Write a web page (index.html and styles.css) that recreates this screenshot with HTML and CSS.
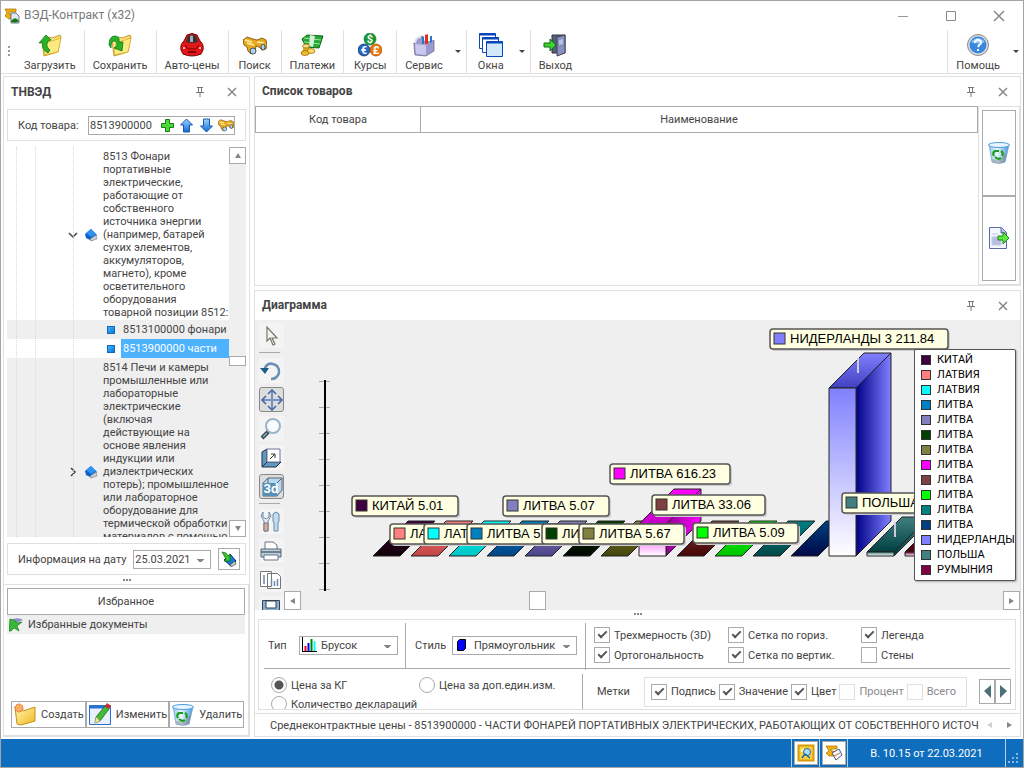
FILE: index.html
```html
<!DOCTYPE html>
<html lang="ru">
<head>
    <meta charset="UTF-8">
    <meta name="viewport" content="width=device-width, initial-scale=1.0">
    <title>ВЭД-Контракт (x32)</title>
    <link rel="stylesheet" href="styles.css">
</head>
<body>
    <!-- Общие значки -->
    <svg class="defs" width="0" height="0">
        <defs>
            <linearGradient id="gFolder" x1="0" y1="0" x2="1" y2="1"><stop offset="0" stop-color="#fff6b0"/><stop offset="1" stop-color="#f0b820"/></linearGradient>
            <linearGradient id="gBlue" x1="0" y1="0" x2="0" y2="1"><stop offset="0" stop-color="#9cd4ff"/><stop offset="1" stop-color="#1468d0"/></linearGradient>
            <linearGradient id="gBin" x1="0" y1="0" x2="1" y2="0"><stop offset="0" stop-color="#8cc8f4"/><stop offset=".4" stop-color="#eef6ff"/><stop offset="1" stop-color="#4898dc"/></linearGradient>
            <symbol id="i-folder" viewBox="0 0 24 24">
                <path d="M4 8l7-4 3 1 8-3 1 2-3 15-14 4z" fill="url(#gFolder)" stroke="#b88a10" stroke-width=".8"/>
                <path d="M6 22l2-12 15-5-3 14z" fill="#fdea80" stroke="#d0a020" stroke-width=".6"/>
            </symbol>
            <symbol id="i-book" viewBox="0 0 14 14">
                <path d="M1 6l6-5 6 6-5 6-6-3z" fill="#1060c8"/>
                <path d="M2 5l5-4 5 5-5 3z" fill="#2e94f4"/>
                <path d="M6 11l6-4 1 4-6 2z" fill="#c8ccd4" stroke="#777" stroke-width=".5"/>
            </symbol>
            <symbol id="i-bin" viewBox="0 0 24 24">
                <path d="M2 3l3 18q7 3 13 0l4-17z" fill="url(#gBin)" stroke="#6898c0" stroke-width=".7"/>
                <ellipse cx="12" cy="4" rx="10.500" ry="2.500" fill="#e8f4ff" stroke="#4c9ee0"/>
                <path d="M5 18l1 3q6 2 12 0l2-9q-5 2-6 7z" fill="#777" opacity=".45"/>
                <path d="M7 15q-2-3 1-5h4M14 10q3 2 1 5M14 17q-3 2-6-1" fill="none" stroke="#18a018" stroke-width="2.200"/>
            </symbol>
            <symbol id="i-glass" viewBox="0 0 24 24">
                <path d="M0 7l4-3 6 2 4 1 5-2 4 2 1 5-1 4-4 1-3-3-3-1-1 6-4 2-3-3-1-4-3-2z" fill="#e8a820" stroke="#6e4800" stroke-width=".8"/>
                <path d="M2 7l7 2M4 10l7 2M14 9l7 1" stroke="#fff0a0" stroke-width="1.500" fill="none"/>
                <ellipse cx="10" cy="18" rx="3" ry="3" fill="#a8d4f8" stroke="#333" stroke-width=".8"/>
                <ellipse cx="20" cy="14" rx="2" ry="3" fill="#a8d4f8" stroke="#333" stroke-width=".8"/>
            </symbol>
            <symbol id="i-pin" viewBox="0 0 8 10">
                <path d="M1 .5h6M2.500 1v4M5.500 1v4M0 5.500h8M4 6v4" stroke="#777" fill="none"/>
            </symbol>
            <symbol id="i-close" viewBox="0 0 10 10"><path d="M1 1l8 8M9 1l-8 8" stroke="#888" stroke-width="1.500"/></symbol>
            <symbol id="i-app" viewBox="0 0 16 16">
                <path d="M1 1h11v3H5v2h4v4l-4 1-4-3 2-3z" fill="#f0b010" stroke="#a07000" stroke-width=".7"/>
                <path d="M7 5h5l3 3v7H7z" fill="#dceaf8" stroke="#446" stroke-width=".7"/>
                <path d="M7 13q3-4 6-2l2 2q-2 3-8 1z" fill="#187818"/>
            </symbol>
        </defs>
    </svg>

    <div class="window">
        <header class="titlebar">
            <svg class="app-icon" width="16" height="16"><use href="#i-app"/></svg>
            <span class="app-title">ВЭД-Контракт (x32)</span>
            <button class="win-button" aria-label="Свернуть"><svg width="12" height="12"><path d="M1 6.500h10" stroke="#999"/></svg></button>
            <button class="win-button" aria-label="Развернуть"><svg width="12" height="12"><path d="M1.500 1.500h9v9h-9z" stroke="#888" fill="none"/></svg></button>
            <button class="win-button" aria-label="Закрыть"><svg width="12" height="12"><path d="M1 1l10 10M11 1L1 11" stroke="#888" stroke-width="1.500"/></svg></button>
        </header>

        <nav class="toolbar">
            <span class="grip"></span>
            <button class="tool">
                <svg width="24" height="24"><use href="#i-folder"/><path d="M10 20q-7-4-5-10L1 10l7-8 5 5-3 1q-3 6 2 9z" fill="#28b428" stroke="#0a6a0a" stroke-width=".7"/></svg>
                <span>Загрузить</span>
            </button>
            <button class="tool">
                <svg width="24" height="24"><use href="#i-folder"/><path d="M1 12q0-9 6-9 5 0 4 6l4 0-1 9-8-3 3-2q0-5-3-5-3 0-3 7z" fill="#28b428" stroke="#0a6a0a" stroke-width=".7"/></svg>
                <span>Сохранить</span>
            </button>
            <button class="tool">
                <svg width="24" height="24"><path d="M7 2q5-3 10 0l3 6q4 3 3 9l-2 4q-9 4-18 0l-2-4q-1-6 3-9z" fill="#e01818" stroke="#700"/><path d="M8 3q4-2 8 0l2 6q-6 2-12 0z" fill="#333"/><path d="M10 3q2-1 3 0v6h-3z" fill="#aab"/><path d="M5 12l3 4h8l3-4" stroke="#800" fill="none"/><path d="M8 19h8" stroke="#800" stroke-width="2"/><path d="M3 15h2M19 15h2" stroke="#ffb0a0" stroke-width="2"/></svg>
                <span>Авто-цены</span>
            </button>
            <button class="tool">
                <svg width="24" height="24"><use href="#i-glass"/></svg>
                <span>Поиск</span>
            </button>
            <button class="tool">
                <svg width="24" height="24"><path d="M2 6l5-4 16 1-4 12-13-1z" fill="#28a838" stroke="#0c6a18"/><path d="M4 5l17 2M4 9l16 2" stroke="#90e890"/><path d="M10 2l5 1-2 11-4-1z" fill="#d8f0d8"/><path d="M3 13h6v7H3z" fill="#e0a820"/><ellipse cx="6" cy="13" rx="3.500" ry="2" fill="#ffe080" stroke="#906000" stroke-width=".7"/><ellipse cx="11" cy="18" rx="4" ry="2.500" fill="#ffd860" stroke="#906000" stroke-width=".7"/><ellipse cx="5" cy="20" rx="4" ry="2.500" fill="#f0b830" stroke="#906000" stroke-width=".7"/></svg>
                <span>Платежи</span>
            </button>
            <button class="tool">
                <svg width="24" height="24"><circle cx="12" cy="6" r="6" fill="#189828" stroke="#075" stroke-width=".7"/><circle cx="6" cy="17" r="6" fill="#2468c8" stroke="#124" stroke-width=".7"/><circle cx="18" cy="17" r="6" fill="#e87810" stroke="#a40" stroke-width=".7"/><text class="coin" x="12" y="10">$</text><text class="coin" x="6" y="21">€</text><text class="coin" x="18" y="21">£</text></svg>
                <span>Курсы</span>
            </button>
            <div class="tool-split">
                <button class="tool">
                    <svg width="24" height="24"><path d="M2 11L6 5l5-2v5l8 1 3-2v11l-8 5-11-1q-1-6-1-12z" fill="#9a9ad0" stroke="#667" stroke-width=".7"/><path d="M3 11l11 1v10l-10-1z" fill="#c8c8ee"/><path d="M3 10q1-6 6-6" fill="none" stroke="#dde" stroke-width="2"/><path d="M10 11V4h2v7zM18 10V3h2v6z" fill="#2878c8"/><path d="M13 11V2l3-1v10z" fill="#e03020"/></svg>
                    <span>Сервис</span>
                </button>
                <button class="arrow" aria-label="Меню сервиса"></button>
            </div>
            <div class="tool-split tool-windows">
                <button class="tool">
                    <svg width="26" height="24"><g fill="#fff" stroke="#0848b8"><path d="M1.500.5h16v15h-16z"/><path d="M4.500 4.500h16v15h-16z"/><path d="M8.500 8.500h16v15h-16z" fill="#d4e8fc"/></g><path d="M1 1.500h17M4 5.500h17M8 9.500h17" stroke="#0848b8" stroke-width="2"/></svg>
                    <span>Окна</span>
                </button>
                <button class="arrow" aria-label="Меню окон"></button>
            </div>
            <button class="tool tool-last">
                <svg width="24" height="24"><path d="M9 2h13v18H9z" fill="#555f78" stroke="#334"/><path d="M14 4l8-2v18l-8 3z" fill="#8890c0" stroke="#445"/><path d="M16 7l4-1v5l-4 1z" fill="#b8c0e8"/><path d="M1 10h6V6l6 6-6 6v-4H1z" fill="#40d030" stroke="#0a7010"/></svg>
                <span>Выход</span>
            </button>
            <div class="tool-split tool-help">
                <button class="tool">
                    <svg width="24" height="24"><circle cx="12" cy="12" r="10.500" fill="#ddd" stroke="#888"/><circle cx="12" cy="12" r="8.500" fill="#3888e0"/><path d="M5 9q7-8 14 0-7 3-14 0z" fill="#8cc4ff"/><path d="M9 10q0-3 3-3t3 3q0 1-2 2l-1 2M12 16v2" fill="none" stroke="#fff" stroke-width="2"/></svg>
                    <span>Помощь</span>
                </button>
                <button class="arrow" aria-label="Меню помощи"></button>
            </div>
        </nav>

        <main class="workspace">
            <aside class="sidebar">
                <section class="panel panel-tree">
                    <div class="panel-head">
                        <h2>ТНВЭД</h2>
                        <button class="icon-button" aria-label="Закрепить"><svg width="8" height="10"><use href="#i-pin"/></svg></button>
                        <button class="icon-button" aria-label="Закрыть"><svg width="10" height="10"><use href="#i-close"/></svg></button>
                    </div>
                    <div class="group code-group">
                        <label for="code">Код товара:</label>
                        <div class="code-box">
                            <input type="text" id="code" value="8513900000">
                            <button aria-label="Добавить"><svg width="15" height="15"><path d="M5.500 1.500h4v4h4v4h-4v4h-4v-4h-4v-4h4z" fill="#50d838" stroke="#108010"/></svg></button>
                            <button aria-label="Вверх"><svg width="15" height="15"><path d="M7.500 1l6 6h-3v7h-6V7h-3z" fill="url(#gBlue)" stroke="#1458b0"/></svg></button>
                            <button aria-label="Вниз"><svg width="15" height="15"><path d="M7.500 14l6-6h-3V1h-6v7h-3z" fill="url(#gBlue)" stroke="#1458b0"/></svg></button>
                            <button aria-label="Найти"><svg width="16" height="16"><use href="#i-glass"/></svg></button>
                        </div>
                    </div>
                    <div class="tree">
                        <ul class="tree-list">
                            <li class="node">
                                <svg class="expander" width="12" height="12"><path d="M2 4l4 4 4-4" fill="none" stroke="#444" stroke-width="1.500"/></svg>
                                <svg class="node-icon" width="14" height="14"><use href="#i-book"/></svg>
                                <span>8513 Фонари<br>портативные<br>электрические,<br>работающие от<br>собственного<br>источника энергии<br>(например, батарей<br>сухих элементов,<br>аккумуляторов,<br>магнето), кроме<br>осветительного<br>оборудования<br>товарной позиции 8512:</span>
                            </li>
                            <li class="leaf even"><i></i><span>8513100000 фонари</span></li>
                            <li class="leaf selected"><i></i><span>8513900000 части</span></li>
                            <li class="node even">
                                <svg class="expander" width="12" height="12"><path d="M4 2l4 4-4 4" fill="none" stroke="#444" stroke-width="1.500"/></svg>
                                <svg class="node-icon" width="14" height="14"><use href="#i-book"/></svg>
                                <span>8514 Печи и камеры<br>промышленные или<br>лабораторные<br>электрические<br>(включая<br>действующие на<br>основе явления<br>индукции или<br>диэлектрических<br>потерь); промышленное<br>или лабораторное<br>оборудование для<br>термической обработки<br>материалов с помощью<br>явления индукции или<br>диэлектрических<br>потерь:</span>
                            </li>
                        </ul>
                        <div class="scroll-v">
                            <button class="up" aria-label="Вверх"></button>
                            <span class="thumb"></span>
                            <button class="down" aria-label="Вниз"></button>
                        </div>
                        <span class="guide guide-1"></span>
                        <span class="guide guide-2"></span>
                        <span class="guide guide-3"></span>
                    </div>
                    <div class="group date-group">
                        <label for="date">Информация на дату</label>
                        <select id="date"><option>25.03.2021</option></select>
                        <button class="box-button" aria-label="Обновить"><svg width="16" height="16"><path d="M3 9l6-6 6 7-5 5z" fill="#1878d8" stroke="#036"/><path d="M9 14l5-4 1 3-5 3z" fill="#ccc" stroke="#333" stroke-width=".6"/><path d="M1 1l4 1 2 3 2-2v7H3l2-2z" fill="#38c828" stroke="#0a6a0a" stroke-width=".7"/></svg></button>
                    </div>
                </section>
                <div class="splitter"><i></i><i></i><i></i></div>
                <section class="favorites">
                    <h3>Избранное</h3>
                    <div class="favorite">
                        <svg width="15" height="14"><path d="M4 1q6-2 10 1l-7 3z" fill="#8c8cc8"/><path d="M1 1l4 1 3 3 5-1-5 4 2 5-5-3-3 3H0z" fill="#38b838" stroke="#0a6a0a" stroke-width=".6"/></svg>
                        <span>Избранные документы</span>
                    </div>
                    <div class="fav-buttons">
                        <button><svg width="24" height="24"><path d="M2 4l6 1 2 3 12-4v14L8 22 4 21z" fill="url(#gFolder)" stroke="#c09020"/><circle cx="6" cy="5" r="4" fill="#f8b060" stroke="#f06030" stroke-dasharray="2 1"/></svg>Создать</button>
                        <button><svg width="24" height="24"><path d="M1.500 2.500h21v19h-21z" fill="#e8f0ff" stroke="#2870d0"/><path d="M1 4h22" stroke="#2870d0" stroke-width="3"/><path d="M8 14L17 3l4 3-9 12-5 2z" fill="#48b838" stroke="#0a600a" stroke-width=".7"/><path d="M17 3l2-3 4 3-2 3z" fill="#d82828"/><path d="M8 14l4 4-5 2z" fill="#f8d8a0"/></svg>Изменить</button>
                        <button><svg width="24" height="24"><use href="#i-bin"/></svg>Удалить</button>
                    </div>
                </section>
            </aside>

            <div class="content">
                <section class="panel goods">
                    <div class="panel-head">
                        <h2>Список товаров</h2>
                        <button class="icon-button" aria-label="Закрепить"><svg width="8" height="10"><use href="#i-pin"/></svg></button>
                        <button class="icon-button" aria-label="Закрыть"><svg width="10" height="10"><use href="#i-close"/></svg></button>
                    </div>
                    <div class="goods-body">
                        <div class="goods-table">
                            <table>
                                <thead><tr><th class="col-code">Код товара</th><th>Наименование</th></tr></thead>
                                <tbody></tbody>
                            </table>
                        </div>
                        <div class="goods-buttons">
                            <button aria-label="Удалить"><svg width="24" height="24"><use href="#i-bin"/></svg></button>
                            <button aria-label="Экспорт"><svg width="22" height="24"><path d="M1.500 1.500h12l5 5v16h-17z" fill="#f4f6ff" stroke="#5868a8"/><path d="M13 2v5h5" fill="#aac0e8" stroke="#5868a8"/><path d="M4 8h6M4 11h9v8H4z" fill="#b8bee0" stroke="#c0c8e8"/><path d="M10 10h5V6l6 6-6 6v-4h-5z" fill="#60e840" stroke="#188818"/></svg></button>
                        </div>
                    </div>
                </section>

                <section class="panel diagram">
                    <div class="panel-head">
                        <h2>Диаграмма</h2>
                        <button class="icon-button" aria-label="Закрепить"><svg width="8" height="10"><use href="#i-pin"/></svg></button>
                        <button class="icon-button" aria-label="Закрыть"><svg width="10" height="10"><use href="#i-close"/></svg></button>
                    </div>
                    <div class="chart">
                        <div class="chart-tools">
                            <button aria-label="Выбор"><svg width="24" height="24"><path d="M8 3v14l3-3 3 7 2-1-3-6h5z" fill="#f4f4f4" stroke="#776" stroke-width="1.200"/></svg></button>
                            <hr>
                            <button aria-label="Поворот"><svg width="24" height="24"><path d="M5 11q3-8 9-6 7 2 6 9-2 6-8 6" fill="none" stroke="#6890b4" stroke-width="2.500"/><path d="M1 9h9l-4 6z" fill="#1c5c88"/></svg></button>
                            <button class="pressed" aria-label="Перемещение"><svg width="24" height="24"><path d="M12 3v18M3 12h18" stroke="#7890c0" stroke-width="2"/><path d="M8 6l4-4 4 4M8 18l4 4 4-4M6 8l-4 4 4 4M18 8l4 4-4 4" fill="none" stroke="#4060a8" stroke-width="1.500"/></svg></button>
                            <button aria-label="Масштаб"><svg width="24" height="24"><path d="M3 21l7-7" stroke="#345" stroke-width="4"/><path d="M4 20l4-4" stroke="#8bb" stroke-width="1.500"/><circle cx="14" cy="9" r="7" fill="#f8fbff" stroke="#9bb4c8" stroke-width="2"/></svg></button>
                            <button aria-label="Глубина"><svg width="24" height="24"><path d="M3 6l5-3v13l-5 5zM3 21l5-5h14l-5 5z" fill="#6098c0" stroke="#234"/><path d="M8 3h13v13H8z" fill="#fff" stroke="#679"/><path d="M11 13l5-5M12 8h4v4" fill="none" stroke="#333"/></svg></button>
                            <button class="pressed" aria-label="Объем"><svg width="24" height="24"><path d="M3 8l5-5h14v12l-5 6H3z" fill="#b8d8f0" stroke="#567"/><path d="M3 8h14v13H3z" fill="#5890b8"/><path d="M17 8l5-5M8 3v5" stroke="#567"/><text class="label-3d" x="11" y="18">3d</text></svg></button>
                            <hr>
                            <button aria-label="Настройки"><svg width="24" height="24"><path d="M4 2v5l3 2 3-2V2l2 4-3 5v10H5V11L2 6z" fill="#e8eef4" stroke="#68a"/><path d="M5 13h4v8H5z" fill="#d8b098" stroke="#777"/><path d="M15 3q3-2 5 1v7l-1 2v8h-4v-8l-1-2V4z" fill="#c4dcec" stroke="#68a"/></svg></button>
                            <button aria-label="Печать"><svg width="24" height="24"><path d="M6 10V3h8l4 3v4" fill="#fff" stroke="#678"/><path d="M2 10h20v8H2z" fill="#bcd0dc" stroke="#567"/><path d="M2 13h20" stroke="#567" stroke-width="1.500"/><path d="M5 16h14v5H5z" fill="#fff" stroke="#678"/></svg></button>
                            <button aria-label="Копировать"><svg width="24" height="24"><path d="M1.500 3.500h11v15h-11zM8.500 5.500h10l3 3v12h-13z" fill="#fff" stroke="#777"/><path d="M5 16V7M12.500 18v-7M15.500 18v-5M18.500 18v-7" stroke="#6888b0" stroke-width="1.500"/></svg></button>
                            <button aria-label="Сохранить"><svg width="24" height="24"><path d="M3.500 3.500h17v17h-17z" fill="#88b0d0" stroke="#345"/><path d="M7 4h10v7H7z" fill="#fff" stroke="#345"/><path d="M8 15h8v6H8z" fill="#ddd"/></svg></button>
                        </div>
                        <div class="canvas">
                            <svg class="plot" id="plot"></svg>
                            <ul class="legend" id="legend"></ul>
                            <div class="scroll-h">
                                <button class="left" aria-label="Влево"></button>
                                <span class="thumb"></span>
                                <button class="right" aria-label="Вправо"></button>
                            </div>
                        </div>
                    </div>
                    <div class="splitter"><i></i><i></i><i></i></div>
                    <form class="options">
                        <div class="options-top">
                            <div class="cell cell-type">
                                <label for="type">Тип</label>
                                <div class="combo combo-type">
                                    <svg width="16" height="16"><path d="M1.500 0v15M1 14.500h15" stroke="#000"/><path d="M4.500 9v5" stroke="red" stroke-width="2"/><path d="M7.500 6v8" stroke="blue" stroke-width="2"/><path d="M10.500 2v12" stroke="green" stroke-width="2"/><path d="M13.500 4v10" stroke="cyan" stroke-width="2"/></svg>
                                    <select id="type"><option>Брусок</option></select>
                                </div>
                            </div>
                            <div class="cell cell-style">
                                <label for="style">Стиль</label>
                                <div class="combo combo-style">
                                    <svg width="16" height="16"><path d="M3.500 4.500l2-2h6v9l-2 2h-6z" fill="#00f" stroke="#000"/></svg>
                                    <select id="style"><option>Прямоугольник</option></select>
                                </div>
                            </div>
                            <div class="checks">
                                <label><input type="checkbox" checked>Трехмерность (3D)</label>
                                <label><input type="checkbox" checked>Сетка по гориз.</label>
                                <label><input type="checkbox" checked>Легенда</label>
                                <label><input type="checkbox" checked>Ортогональность</label>
                                <label><input type="checkbox" checked>Сетка по вертик.</label>
                                <label><input type="checkbox">Стены</label>
                            </div>
                        </div>
                        <div class="options-bottom">
                            <div class="radios">
                                <label><input type="radio" name="value" checked>Цена за КГ</label>
                                <label><input type="radio" name="value">Цена за доп.един.изм.</label>
                                <label><input type="radio" name="value">Количество деклараций</label>
                            </div>
                            <div class="marks">
                                <span class="marks-title">Метки</span>
                                <div class="marks-box">
                                    <label><input type="checkbox" checked>Подпись</label>
                                    <label><input type="checkbox" checked>Значение</label>
                                    <label><input type="checkbox" checked>Цвет</label>
                                    <label class="off"><input type="checkbox" disabled>Процент</label>
                                    <label class="off"><input type="checkbox" disabled>Всего</label>
                                </div>
                                <div class="pager">
                                    <button type="button" aria-label="Назад"><svg width="9" height="13"><path d="M8 0v13L1 6z" fill="#4c7078"/></svg></button>
                                    <button type="button" aria-label="Вперед"><svg width="9" height="13"><path d="M1 0v13l7-7z" fill="#4c7078"/></svg></button>
                                </div>
                            </div>
                        </div>
                    </form>
                    <div class="tabs">
                        <a href="#">Среднеконтрактные цены - 8513900000 - ЧАСТИ ФОНАРЕЙ ПОРТАТИВНЫХ ЭЛЕКТРИЧЕСКИХ, РАБОТАЮЩИХ ОТ СОБСТВЕННОГО ИСТОЧНИК</a>
                        <button class="left" aria-label="Влево"></button>
                        <button class="right" aria-label="Вправо"></button>
                    </div>
                </section>
            </div>
        </main>

        <footer class="statusbar">
            <div class="status-cell"><button aria-label="Поиск кода"><svg width="18" height="18"><path d="M1.500 1.500h15v15h-15z" fill="#f8d040" stroke="#d89a08" stroke-width="2"/><path d="M4 5h4v3H4z" fill="#fff4b0"/><circle cx="10" cy="8" r="3.500" fill="#b0dcf8" stroke="#1868b0"/><path d="M5 14l3-4 5 4" stroke="#1868b0" stroke-width="1.500" fill="none"/></svg></button></div>
            <div class="status-cell"><button aria-label="Документы"><svg width="18" height="18"><path d="M1 2h11v3H6v2h3v5H4L1 9l3-2z" fill="#f0b010" stroke="#a07000" stroke-width=".7"/><path d="M7 9l7-4 3 6-6 5z" fill="#f4f8ff" stroke="#557"/><path d="M9 12l6-3" stroke="#d07030"/></svg></button></div>
            <div class="status-cell version">В. 10.15 от 22.03.2021</div>
            <svg class="sizegrip" width="12" height="12"><path d="M8 0h2v2H8zM4 4h2v2H4zM8 4h2v2H8zM0 8h2v2H0zM4 8h2v2H4zM8 8h2v2H8z" fill="#8cb4dc"/></svg>
        </footer>
    </div>
    <script src="chart.js"></script>
</body>
</html>
```
FILE: styles.css
```css
* {
    box-sizing: border-box;
}
body {
    margin: 0;
    font-family: Roboto, "Noto Sans", sans-serif;
    font-size: 11px;
    line-height: 13px;
    color: #444;
    background-color: #fff;
}
button, input, select {
    font: inherit;
    color: inherit;
}
button {
    padding: 0;
    border: none;
    background: none;
    cursor: pointer;
}
svg {
    display: block;
    flex: none;
}
h2, h3, ul {
    margin: 0;
    padding: 0;
    font-size: inherit;
    list-style: none;
}
.defs {
    position: absolute;
}
.window {
    display: flex;
    flex-direction: column;
    height: 100vh;
    min-height: 600px;
    border: 1px solid #a5a5a5;
}

/* Заголовок */
.titlebar {
    display: flex;
    align-items: center;
    height: 29px;
    padding-left: 3px;
    color: #777;
}
.app-title {
    flex: 1;
    margin-left: 4px;
    font-size: 12px;
}
.win-button {
    display: flex;
    justify-content: center;
    width: 48px;
}

/* Панель инструментов */
.toolbar {
    display: flex;
    height: 44px;
    border-bottom: 1px solid #e0e0e0;
}
.grip {
    width: 2px;
    height: 10px;
    margin: 16px 6px 0 7px;
    background: repeating-linear-gradient(#999 0 2px, #fff 2px 4px);
}
.tool {
    display: flex;
    flex-direction: column;
    align-items: center;
    gap: 2px;
    min-width: 53px;
    padding: 3px 8px 0;
    border-right: 1px solid #e0e0e0;
}
.tool-split {
    display: flex;
    border-right: 1px solid #e0e0e0;
}
.tool-split .tool, .tool-last {
    min-width: 48px;
    border-right: none;
}
.arrow {
    width: 15px;
}
.arrow::before {
    content: "";
    display: block;
    width: 0;
    margin: 0 auto;
    border: 3px solid transparent;
    border-top-color: #444;
    border-bottom: none;
}
.tool-help {
    margin-left: auto;
    border-right: none;
    border-left: 1px solid #e0e0e0;
}
.coin {
    font-size: 11px;
    font-weight: bold;
    fill: #fff;
    text-anchor: middle;
}

/* Рабочая область */
.workspace {
    display: flex;
    flex: 1;
    gap: 4px;
    min-height: 0;
    padding: 2px;
}
.sidebar {
    display: flex;
    flex-direction: column;
    width: 247px;
}
.content {
    display: flex;
    flex: 1;
    flex-direction: column;
    gap: 4px;
    min-width: 0;
}
.panel {
    display: flex;
    flex-direction: column;
    border: 1px solid #e0e0e0;
}
.panel-head {
    display: flex;
    align-items: center;
    height: 29px;
    padding: 0 7px;
}
.panel-head h2 {
    flex: 1;
    font-size: 12px;
}
.icon-button {
    display: flex;
    justify-content: center;
    width: 20px;
    margin-left: 12px;
}
.group {
    display: flex;
    align-items: center;
    height: 32px;
    margin: 0 3px;
    border: 1px solid #e0e0e0;
    padding: 0 10px;
}
.panel-tree {
    flex: 1;
    min-height: 0;
    border-bottom: none;
}
.panel-tree .panel-head {
    height: 32px;
    padding-bottom: 2px;
}
.code-group {
    justify-content: space-between;
}
.code-box {
    display: flex;
    align-items: center;
    justify-content: space-between;
    width: 147px;
    height: 19px;
    border: 1px solid #aaa;
}
.code-box input {
    width: 66px;
    padding: 0 1px;
    border: none;
    outline: none;
}

/* Дерево кодов */
.tree {
    position: relative;
    display: flex;
    flex: 1;
    min-height: 0;
    margin: 6px 3px;
    overflow: hidden;
}
.tree-list {
    flex: 1;
    min-width: 0;
}
.node {
    display: flex;
    align-items: center;
    padding: 3px 0 1px 60px;
    white-space: nowrap;
}
.node-icon {
    margin: 0 5px;
}
.even {
    background-color: #efefef;
}
.leaf {
    display: flex;
    align-items: center;
    height: 19px;
    padding-left: 100px;
    white-space: nowrap;
}
.leaf i {
    flex: none;
    width: 8px;
    height: 8px;
    margin-right: 6px;
    background: linear-gradient(135deg, #40b4ff, #0878e0);
    border: 1px solid #1468b8;
}
.leaf span {
    flex: 1;
    padding: 3px 2px;
}
.selected span {
    color: #fff;
    background-color: #4db2ff;
}
.guide {
    position: absolute;
    top: 0;
    bottom: 0;
    border-left: 1px dotted #d8d8d8;
}
.guide-1 {
    left: 9px;
}
.guide-2 {
    left: 28px;
}
.guide-3 {
    left: 66px;
}
.scroll-v {
    display: flex;
    flex-direction: column;
    width: 17px;
    background-color: #efefef;
}
.scroll-v button, .scroll-h button, .thumb {
    display: flex;
    align-items: center;
    justify-content: center;
    width: 17px;
    height: 17px;
    border: 1px solid #aaa;
    background-color: #fff;
}
.scroll-v .thumb {
    height: 10px;
    margin: auto 0 154px;
}
.up::before, .down::before, .left::before, .right::before {
    content: "";
    border: 3px solid transparent;
}
.up::before {
    border-bottom: 5px solid #888;
    border-top: none;
}
.down::before {
    border-top: 5px solid #888;
    border-bottom: none;
}
.left::before {
    border-right: 5px solid #888;
    border-left: none;
}
.right::before {
    border-left: 5px solid #888;
    border-right: none;
}
.date-group {
    justify-content: space-between;
    padding-right: 5px;
}
select {
    appearance: none;
    height: 19px;
    padding: 0 15px 0 1px;
    border: 1px solid #aaa;
    border-radius: 0;
    background: linear-gradient(#888, #888) right 6px top 8px / 7px 1px no-repeat,
        linear-gradient(#888, #888) right 7px top 9px / 5px 1px no-repeat,
        linear-gradient(#888, #888) right 8px top 10px / 3px 1px no-repeat, #fff;
}
#date {
    width: 78px;
}
.box-button {
    display: flex;
    align-items: center;
    justify-content: center;
    width: 22px;
    height: 22px;
    border: 1px solid #aaa;
}
.splitter {
    display: flex;
    align-items: center;
    justify-content: center;
    gap: 1px;
    height: 8px;
}
.splitter i {
    width: 2px;
    height: 2px;
    background-color: #888;
}
.sidebar .splitter {
    height: 9px;
    border: 1px solid #e0e0e0;
    border-width: 0 1px;
}

/* Избранное */
.favorites {
    display: flex;
    flex-direction: column;
    height: 153px;
    padding: 3px;
    border: 1px solid #e0e0e0;
    border-right-width: 2px;
    border-bottom-width: 2px;
}
.favorites h3 {
    padding: 6px;
    border: 1px solid #aaa;
    font-weight: normal;
    text-align: center;
}
.favorite {
    display: flex;
    align-items: center;
    gap: 4px;
    height: 19px;
    padding-left: 2px;
    background-color: #efefef;
}
.fav-buttons {
    display: flex;
    margin: auto 4px 4px;
}
.fav-buttons button {
    display: flex;
    flex: 1 1 auto;
    align-items: center;
    gap: 4px;
    height: 27px;
    padding: 0 1px;
    border: 1px solid #aaa;
}

/* Список товаров */
.goods {
    height: 210px;
}
.goods-body {
    display: flex;
    flex: 1;
}
.goods-table {
    flex: 1;
}
table {
    width: 100%;
    table-layout: fixed;
    border-collapse: collapse;
}
th {
    height: 26px;
    padding: 0;
    border: 1px solid #aaa;
    font-weight: normal;
}
.col-code {
    width: 165px;
}
.goods-buttons {
    display: flex;
    flex-direction: column;
    width: 42px;
    padding: 3px;
    border: 1px solid #e0e0e0;
}
.goods-buttons button {
    display: flex;
    flex: 1;
    align-items: center;
    justify-content: center;
    border: 1px solid #aaa;
}

/* Диаграмма */
.diagram {
    flex: 1;
    min-height: 0;
}
.chart {
    display: flex;
    flex: 1;
    min-height: 0;
    background-color: #efefef;
}
.chart-tools {
    width: 29px;
    padding: 3px 0 0 4px;
    overflow: hidden;
}
.chart-tools button {
    display: block;
    width: 25px;
    height: 25px;
    margin-bottom: 4px;
    background-color: #f4f4f4;
}
.chart-tools .pressed {
    border: 1px solid #888;
    border-radius: 3px;
    background-color: #ddd;
}
.chart-tools hr {
    width: 21px;
    height: 1px;
    margin: 0 0 5px;
    border: none;
    background-color: #aaa;
}
.label-3d {
    font-size: 13px;
    font-weight: bold;
    fill: #fff;
    text-anchor: middle;
}
.canvas {
    position: relative;
    flex: 1;
    min-width: 0;
}
.plot {
    width: 100%;
    height: 100%;
}
.mark-text {
    font-family: "Liberation Sans", Arial, sans-serif;
    font-size: 13px;
    fill: #000;
}
.legend {
    position: absolute;
    top: 29px;
    right: 4px;
    width: 102px;
    padding: 2px 0 3px 6px;
    border: 1px solid #555;
    border-radius: 2px;
    background-color: #fff;
    box-shadow: 1px 1px 2px #aaa;
    color: #000;
}
.legend li {
    display: flex;
    align-items: center;
    gap: 6px;
    height: 15px;
    white-space: nowrap;
}
.legend i {
    width: 10px;
    height: 10px;
    border: 1px solid #333;
}
.scroll-h {
    position: absolute;
    left: 0;
    right: 0;
    bottom: 0;
    display: flex;
    justify-content: space-between;
}
.scroll-h button, .scroll-h .thumb {
    height: 19px;
}
.scroll-h .thumb {
    margin-left: -229px;
}

/* Параметры диаграммы */
.options {
    height: 91px;
    margin: 1px 4px 3px 3px;
    border: 1px solid #e0e0e0;
}
.options-top {
    display: flex;
    height: 49px;
    margin: 0 5px;
    border-bottom: 1px solid #aaa;
}
.cell {
    display: flex;
    align-items: center;
    justify-content: space-between;
    height: 47px;
    margin-top: 3px;
    padding-bottom: 3px;
    border-right: 1px solid #aaa;
}
.cell-type {
    width: 142px;
    padding-left: 4px;
    padding-right: 7px;
}
.cell-style {
    width: 180px;
    padding-left: 9px;
    padding-right: 8px;
}
.combo {
    position: relative;
}
.combo svg {
    position: absolute;
    top: 1px;
    left: 2px;
}
.combo select {
    width: 100%;
    padding-left: 21px;
}
.combo-type {
    width: 99px;
}
.combo-style {
    width: 125px;
}
.checks {
    display: grid;
    flex: 1;
    grid-template-columns: 134px 133px 1fr;
    align-content: start;
    gap: 4px 0;
    padding: 7px 0 0 8px;
}
.options label {
    display: flex;
    align-items: center;
    white-space: nowrap;
}
input[type="checkbox"], input[type="radio"] {
    appearance: none;
    flex: none;
    width: 16px;
    height: 16px;
    margin: 0 4px 0 0;
    border: 1px solid #aaa;
    background-color: #fff;
}
input[type="checkbox"]:checked::before {
    content: "";
    display: block;
    width: 7px;
    height: 3px;
    margin: 3px 3px;
    border: 2px solid #555;
    border-width: 0 0 2px 2px;
    transform: rotate(-45deg);
}
input[type="radio"] {
    border-radius: 50%;
}
input[type="radio"]:checked {
    background: radial-gradient(#555 4px, #fff 5px);
}
.options-bottom {
    display: flex;
    height: 40px;
}
.radios {
    display: grid;
    grid-template-columns: 148px 1fr;
    align-content: start;
    gap: 3px 0;
    width: 312px;
    margin-left: 2px;
    padding: 8px 0 0 10px;
    background-color: #fff;
    overflow: hidden;
}
.marks {
    display: flex;
    flex: 1;
    align-items: center;
    margin: 5px 4px 0 9px;
    padding: 0 0 0 14px;
    border-left: 1px solid #aaa;
}
.marks-title {
    width: 47px;
}
.marks-box {
    display: flex;
    align-items: center;
    gap: 3px;
    width: 323px;
    height: 30px;
    padding-left: 6px;
    border: 1px solid #e0e0e0;
}
.options .off {
    color: #888;
}
.off input {
    border-color: #e0e0e0;
}
.pager {
    display: flex;
    margin-left: auto;
}
.pager button {
    display: flex;
    align-items: center;
    justify-content: center;
    width: 16px;
    height: 25px;
    border: 1px solid #aaa;
}
.tabs {
    display: flex;
    align-items: center;
    height: 23px;
    padding: 0 1px 0 15px;
    border-top: 1px solid #e0e0e0;
}
.tabs a {
    flex: 1;
    color: #444;
    text-decoration: none;
    white-space: nowrap;
    overflow: hidden;
}
.tabs button {
    display: flex;
    justify-content: center;
    width: 20px;
}
.tabs .left {
    opacity: 0.4;
}

/* Строка состояния */
.statusbar {
    display: flex;
    justify-content: flex-end;
    height: 28px;
    background-color: #0f6dbd;
    color: #fff;
}
.status-cell {
    display: flex;
    align-items: center;
    justify-content: center;
    width: 28px;
    border-left: 1px solid #b4d0ec;
}
.status-cell button {
    display: flex;
    align-items: center;
    justify-content: center;
    width: 24px;
    height: 24px;
    border: 1px solid #aaa;
    background-color: #fff;
}
.version {
    width: 159px;
    border-right: 1px solid #b4d0ec;
}
.sizegrip {
    margin: 14px 3px 0 2px;
}
```
FILE: chart.js
```javascript
const items = [
    { name: 'КИТАЙ', color: '#400040', dark: '#100008' },
    { name: 'ЛАТВИЯ', color: '#ff8080', dark: '#c04444' },
    { name: 'ЛАТВИЯ', color: '#00ffff', dark: '#00c4c4' },
    { name: 'ЛИТВА', color: '#0080c0', dark: '#004488' },
    { name: 'ЛИТВА', color: '#8080c0', dark: '#4c4488' },
    { name: 'ЛИТВА', color: '#004000', dark: '#000400' },
    { name: 'ЛИТВА', color: '#808040', dark: '#444408' },
    { name: 'ЛИТВА', color: '#ff00ff', dark: '#900090', top: '#c400c4', height: 32 },
    { name: 'ЛИТВА', color: '#804040', dark: '#440404' },
    { name: 'ЛИТВА', color: '#00ff00', dark: '#00c400' },
    { name: 'ЛИТВА', color: '#008080', dark: '#004848' },
    { name: 'ЛИТВА', color: '#004080', dark: '#000848' },
    { name: 'НИДЕРЛАНДЫ', color: '#8080ff', dark: '#000088', top: '#4040c0', height: 168 },
    { name: 'ПОЛЬША', color: '#408080', dark: '#004040', height: 4 },
    { name: 'РУМЫНИЯ', color: '#800040', dark: '#480008', height: 4 }
];

// Подписи столбцов: x, y, ширина, номер элемента, значение
const marks = [
    [67, 176, 106, 0, '5.01'],
    [105, 204, 60, 1, ''],
    [139, 204, 60, 2, ''],
    [182, 204, 106, 3, '5.0'],
    [218, 176, 106, 4, '5.07'],
    [257, 204, 60, 5, ''],
    [294, 204, 105, 6, '5.67'],
    [325, 144, 120, 7, '616.23'],
    [367, 175, 113, 8, '33.06'],
    [408, 203, 105, 9, '5.09'],
    [485, 9, 178, 12, '3 211.84'],
    [557, 173, 120, 13, '']
];

const floor = 236;
const barWidth = 27;
const depth = 35;

function poly(points, fill) {
    return `<polygon points="${points.join(' ')}" fill="${fill}" stroke="#222" stroke-width="1"/>`;
}

let defs = '';
let plot = '';

// Ось значений
for (let i = 0; i < 9; i++) {
    plot += `<path d="M34 ${61 + i * 26}.5h11" stroke="#aaa"/>`;
}
plot += '<path d="M40 60v211" stroke="#000" stroke-width="2"/>';

items.forEach((item, i) => {
    const x = 88 + i * 38;
    const h = item.height || 0;
    const y = floor - h;
    defs += `<linearGradient id="top${i}" x1="0" y1="1" x2="0" y2="0"><stop offset="0" stop-color="${item.top || item.dark}"/><stop offset="1" stop-color="${item.color}"/></linearGradient>`;
    defs += `<linearGradient id="side${i}"><stop offset="0" stop-color="${item.dark}"/><stop offset="1" stop-color="${item.color}"/></linearGradient>`;
    defs += `<linearGradient id="front${i}" x1="0" y1="0" x2="0" y2="1"><stop offset="0" stop-color="${item.color}"/><stop offset="1" stop-color="#fff"/></linearGradient>`;
    plot += poly([x, y, x + depth, y - depth, x + barWidth + depth, y - depth, x + barWidth, y], `url(#top${i})`);
    if (h) {
        plot += poly([x + barWidth, y, x + barWidth + depth, y - depth, x + barWidth + depth, floor - depth, x + barWidth, floor], `url(#side${i})`);
        plot += poly([x, y, x + barWidth, y, x + barWidth, floor, x, floor], `url(#front${i})`);
    }
});
plot += '<path d="M573 38v15M610 202v15" stroke="#ccd" stroke-width="2"/>';

marks.forEach(([x, y, width, index, value]) => {
    const item = items[index];
    plot += `<rect x="${x + 2}" y="${y + 2}" width="${width}" height="20" rx="3" fill="#ccc"/>`;
    plot += `<rect x="${x}" y="${y}" width="${width}" height="20" rx="3" fill="#ffffe1" stroke="#555" stroke-width="1.500"/>`;
    plot += `<rect x="${x + 4}" y="${y + 4}" width="11" height="11" fill="${item.color}" stroke="#333"/>`;
    plot += `<text class="mark-text" x="${x + 20}" y="${y + 14}">${item.name} ${value}</text>`;
});

document.getElementById('plot').innerHTML = `<defs>${defs}</defs><g transform="translate(1 0)">${plot}</g>`;
document.getElementById('legend').innerHTML = items
    .map(item => `<li><i style="background-color: ${item.color}"></i>${item.name}</li>`)
    .join('');
```
